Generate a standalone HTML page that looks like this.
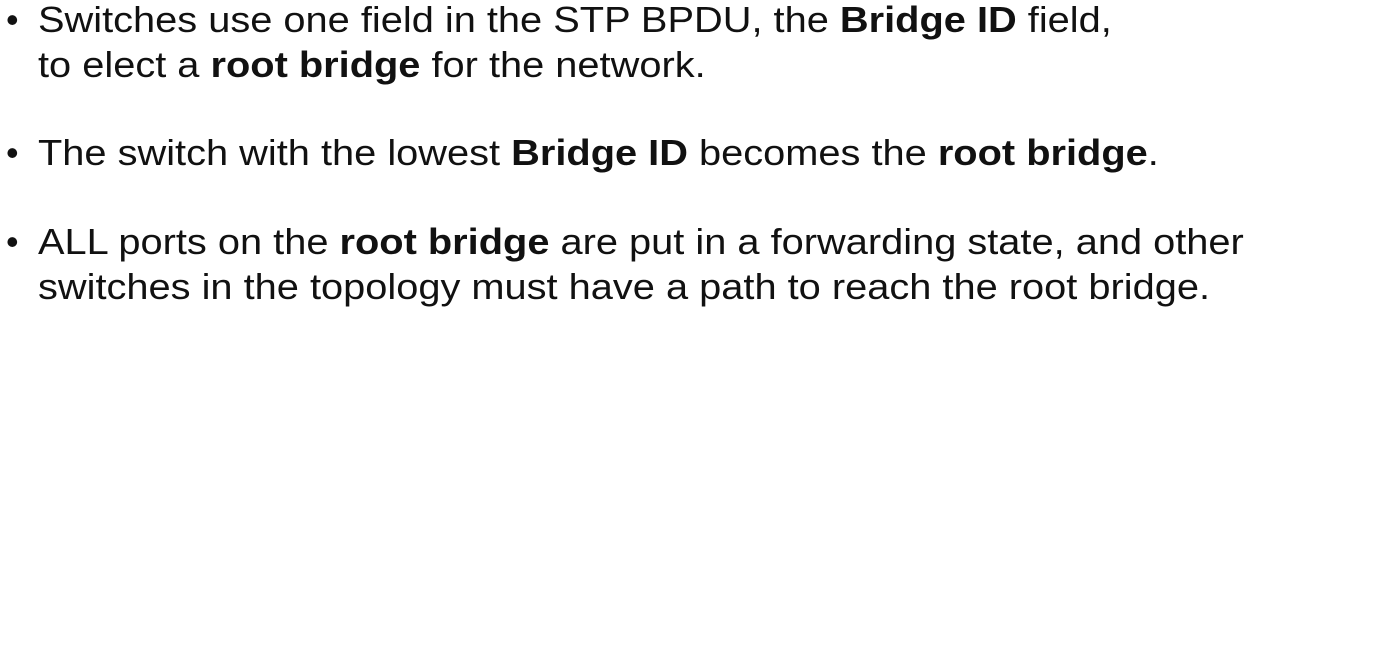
<!DOCTYPE html>
<html><head><meta charset="utf-8"><style>
html,body{margin:0;padding:0;background:#fff;width:1384px;height:666px;overflow:hidden}
body{font-family:"Liberation Sans",sans-serif;font-size:36px;color:#111;position:relative}
.l{position:absolute;left:38px;line-height:45px;white-space:nowrap;transform:scaleX(1.105);transform-origin:0 0}
.b{position:absolute;left:6px;line-height:45px}
b{font-weight:bold}
</style></head><body>
<div class="b" style="top:-3px">•</div>
<div class="l" style="top:-3px">Switches use one field in the STP BPDU, the <b>Bridge ID</b> field,</div>
<div class="l" style="top:42px">to elect a <b>root bridge</b> for the network.</div>
<div class="b" style="top:130px">•</div>
<div class="l" style="top:130px">The switch with the lowest <b>Bridge ID</b> becomes the <b>root bridge</b>.</div>
<div class="b" style="top:219px">•</div>
<div class="l" style="top:219px">ALL ports on the <b>root bridge</b> are put in a forwarding state, and other</div>
<div class="l" style="top:264px">switches in the topology must have a path to reach the root bridge.</div>
</body></html>
